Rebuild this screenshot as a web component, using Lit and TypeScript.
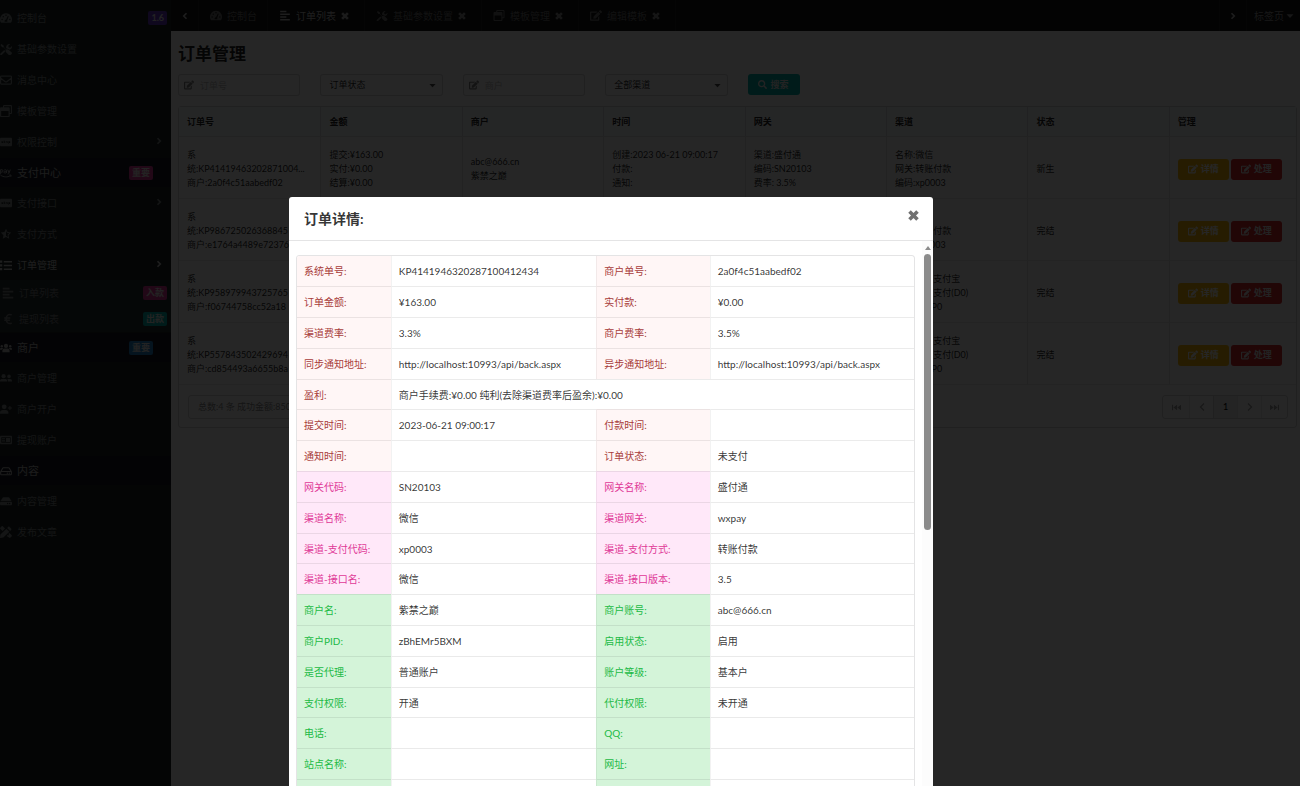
import { LitElement, html, css, svg, nothing } from "lit";
import { customElement, property, state } from "lit/decorators.js";

const ICONS: Record<string, { box: string; body: unknown }> = {
  gauge: {
    box: "0 0 18 16",
    body: svg`<path fill-rule="evenodd" d="M9 1a9 9 0 0 0-7.6 13.8c.2.3.5.5.9.5h13.4c.4 0 .7-.2.9-.5A9 9 0 0 0 9 1zM9 2.8a1 1 0 1 1 0 2.1 1 1 0 0 1 0-2.100zM3.200 11.200a1 1 0 1 1 0-2.100 1 1 0 0 1 0 2.100zM4.900 7a1 1 0 1 1 0-2.100A1 1 0 0 1 4.900 7zM12.900 5.800l-2.200 5.800c.5.9.4 1.600.1 2.200H7.200c-.8-1.400.2-3 1.900-3l2.500-5.600c.4-.7 1.600-.2 1.300.6zM14.800 11.200a1 1 0 1 1 0-2.100 1 1 0 0 1 0 2.100z"/>`,
  },
  tools: {
    box: "0 0 16 16",
    body: svg`<path d="M15.600 12.800l-3.700-3.600c-1.100-1-2.500-1.200-3.800-.6L5 5.400V3.600L2 1.400.6 2.800l2.200 3h1.800L7.700 9c-.6 1.200-.4 2.700.6 3.700l3.700 3.600c.4.4 1.200.4 1.700 0l1.900-1.800c.5-.5.5-1.200 0-1.700z"/><path d="M10.700 8c1 0 1.500.4 2.100.9A4.500 4.500 0 0 0 16 4l-2.400 2.300-2.100-.4-.4-2.100L13.400 1.500A4.500 4.500 0 0 0 8.200 6.900zM6.800 10.600L5.600 9.300.6 14.100c-1.200 1.500.4 3 1.700 1.800l4.500-4.200z"/>`,
  },
  mail: {
    box: "0 0 16 16",
    body: svg`<path fill="none" stroke="currentColor" stroke-width="1.600" d="M1.800 2.800h12.400c.6 0 1 .4 1 1v8.600c0 .6-.4 1-1 1H1.800c-.6 0-1-.4-1-1V3.800c0-.6.4-1 1-1zM1 5.600l5.600 4.300c.9.7 1.900.7 2.800 0L15 5.600"/>`,
  },
  windows: {
    box: "0 0 16 16",
    body: svg`<path fill-rule="evenodd" d="M14.500 0h-9C4.700 0 4 .7 4 1.500V3H1.500C.7 3 0 3.700 0 4.500v10c0 .8.7 1.500 1.500 1.500h10c.8 0 1.500-.7 1.500-1.500V12h1.500c.8 0 1.500-.7 1.500-1.500v-9c0-.8-.7-1.500-1.500-1.500zM11.400 14.500H1.600V8h9.800zM14.500 10.500H13v-6C13 3.700 12.300 3 11.500 3h-6V1.500h9z"/>`,
  },
  card: {
    box: "0 0 18 16",
    body: svg`<path fill-rule="evenodd" d="M1.500 1.500h15c.8 0 1.500.7 1.500 1.500v10c0 .8-.7 1.500-1.500 1.500h-15C.7 14.500 0 13.800 0 13V3c0-.8.7-1.500 1.500-1.500zM2.200 6.700v.9l1.600.8H2.200v1.200h2.500V8.300l-1.500-.8h1.500v-.8zM5.700 5.700v3.900h1.900v-.9h-.9V7.400h.9v-.8h-.9v-.9zM8.700 6.700v2.900h.9V7.500h.9v-.8zM11.100 6.700v2.900h.9V6.700zM12.700 6.700v3.900h.8v-1h1.700V6.700z"/>`,
  },
  pay: {
    box: "0 0 20 16",
    body: svg`<path fill="none" stroke="currentColor" stroke-width="1.400" d="M1 10V2.500h2.400c2.200 0 2.200 4 0 4H1M7 3c2.400-1 3.800-.4 3.800 1v4M10.800 5.500C8 5 6.600 5.700 6.600 6.800 6.800 8.500 9.600 8.400 10.800 7M12.800 2.300l2.200 5.400 2.200-5.400M15 7.700c-.5 1.600-1 2.200-2.400 2M.8 11.500c5 3.600 11.500 4 16.600 1M15.500 11.500c3-.5 3.800-.2 2.300 3"/>`,
  },
  starHalf: {
    box: "0 0 18 16",
    body: svg`<path fill-rule="evenodd" d="M9 0l2.400 5 5.400.8-3.900 3.900.9 5.500L9 12.600l-4.800 2.600.9-5.500L1.200 5.800 6.600 5zM9 3.500v7.300l3 1.600-.6-3.300 2.400-2.300-3.300-.5z"/>`,
  },
  list: {
    box: "0 0 16 16",
    body: svg`<path d="M0 2h3v3H0zM0 7h3v3H0zM0 12h3v3H0zM5 2.500h11v2H5zM5 7.500h11v2H5zM5 12.500h11v2H5z"/>`,
  },
  align: {
    box: "0 0 16 16",
    body: svg`<path d="M1 1h9v2.200H1zM1 5h14v2.200H1zM1 9h9v2.200H1zM1 13h14v2.200H1z"/>`,
  },
  euro: {
    box: "0 0 16 16",
    body: svg`<path fill="none" stroke="currentColor" stroke-width="2" d="M13 2.600C9 .6 5.800 3 5.500 8c.3 5 3.500 7.400 7.500 5.400M3 6.500h8M3 9.500h7.500"/>`,
  },
  users: {
    box: "0 0 20 16",
    body: svg`<circle cx="3" cy="5" r="2"/><circle cx="17" cy="5" r="2"/><circle cx="10" cy="4.500" r="3.500"/><path d="M4 15v-2.200C4 10.300 5.500 9 7.500 9h5c2 0 3.500 1.300 3.500 3.800V15zM0 11V9.700C0 8.500 1 8 2 8h2c.7 0 1 .2 1.400.5C4 9.200 3.400 10 3.200 11zM20 11V9.700c0-1.200-1-1.700-2-1.700h-2c-.7 0-1 .2-1.400.5 1.400.7 2 1.500 2.200 2.500z"/>`,
  },
  friends: {
    box: "0 0 20 16",
    body: svg`<circle cx="6" cy="5" r="3.500"/><circle cx="15" cy="5.300" r="3"/><path d="M0 14v-1.500C0 10.500 1.500 9.500 3.500 9.500h5c2 0 3.500 1 3.500 3V14zM13.300 14h6.700v-1.300c0-2-1.300-3.200-3-3.200h-3.500c-.6 0-1 .1-1.400.3.900.9 1.200 2 1.200 4.200z"/>`,
  },
  userPlus: {
    box: "0 0 20 16",
    body: svg`<circle cx="7" cy="4.300" r="4"/><path d="M0 16v-2.500C0 11 2 9.500 4.200 9.500h5.600c2.200 0 4.200 1.500 4.200 4V16zM15.700 3h1.600v2.500h2.500v1.700h-2.500v2.500h-1.600V7.200h-2.500V5.500h2.500z"/>`,
  },
  idCard: {
    box: "0 0 18 16",
    body: svg`<path fill-rule="evenodd" d="M1.500 1.500h15c.8 0 1.500.7 1.500 1.500v10c0 .8-.7 1.500-1.500 1.500h-15C.7 14.500 0 13.800 0 13V3c0-.8.7-1.500 1.500-1.500zM2 4v8h14V4z"/><path d="M3 5.200h4.500v1.300H3zM3 7.700h4.500V9H3zM3 10.100h5v1H3zM9 5h6v6H9z"/>`,
  },
  hddOutline: {
    box: "0 0 18 16",
    body: svg`<path fill="none" stroke="currentColor" stroke-width="1.600" d="M1 9l3.200-5.400c.3-.4.600-.6 1-.6h7.600c.4 0 .7.200 1 .6L17 9v3.500c0 .6-.4 1-1 1H2c-.6 0-1-.4-1-1zM1 8.700h16"/><circle cx="11" cy="11.200" r="1"/><circle cx="14" cy="11.200" r="1"/>`,
  },
  hdd: {
    box: "0 0 18 16",
    body: svg`<path fill-rule="evenodd" d="M1.500 9h15c.8 0 1.500.7 1.500 1.500v2.300c0 .8-.7 1.500-1.500 1.500h-15c-.8 0-1.500-.7-1.500-1.500v-2.300C0 9.700.7 9 1.500 9zM14.500 10.700a1 1 0 1 0 0 2 1 1 0 0 0 0-2zM11.500 10.700a1 1 0 1 0 0 2 1 1 0 0 0 0-2z"/><path d="M.7 8L4 3.200c.3-.4.7-.7 1.200-.7h7.600c.5 0 .9.300 1.200.7L17.300 8z"/>`,
  },
  pencilRuler: {
    box: "0 0 16 16",
    body: svg`<path d="M3.400 6.700l3.300-3.300L4 .6c-.6-.6-1.500-.6-2 0L.6 2c-.6.600-.6 1.500 0 2zM12.800 1.300l2 2c.6.600.6 1.300 0 1.900l-1.300 1.300-4-4 1.300-1.300c.6-.5 1.400-.5 2 0zM8.500 3.500l4 4-8 7.900L.7 16c-.4 0-.7-.3-.7-.7l.6-3.900zM15.400 12l-2.800-2.800-1.600 1.600 1 1-.8.800-1-1-.9.900 1 1-.8.800-1-1L12 15.400c.6.600 1.500.6 2 0l1.400-1.400c.6-.6.6-1.500 0-2z"/>`,
  },
  edit: {
    box: "0 0 576 512",
    body: svg`<path d="M402.6 83.2l90.2 90.2c3.8 3.8 3.8 10 0 13.8L274.4 405.6l-92.8 10.3c-12.4 1.4-22.9-9.100-21.5-21.5l10.3-92.8L388.8 83.2c3.8-3.8 10-3.8 13.8 0zm162-22.9l-48.8-48.8c-15.2-15.2-39.9-15.2-55.2 0l-35.4 35.400c-3.8 3.8-3.8 10 0 13.8l90.2 90.2c3.8 3.8 10 3.8 13.8 0l35.4-35.4c15.2-15.3 15.2-40 0-55.2zM384 346.2V448H64V128h229.8c3.2 0 6.2-1.3 8.5-3.5l40-40c7.6-7.6 2.2-20.5-8.5-20.5H48C21.5 64 0 85.5 0 112v352c0 26.5 21.5 48 48 48h352c26.5 0 48-21.5 48-48V306.2c0-10.7-12.9-16-20.5-8.5l-40 40c-2.2 2.3-3.500 5.300-3.500 8.500z"/>`,
  },
  search: {
    box: "0 0 512 512",
    body: svg`<path d="M505 442.7L405.3 343c-4.5-4.5-10.6-7-17-7H372c27.6-35.3 44-79.7 44-128C416 93.100 322.900 0 208 0S0 93.100 0 208s93.100 208 208 208c48.300 0 92.700-16.400 128-44v16.300c0 6.400 2.500 12.500 7 17l99.700 99.700c9.400 9.400 24.600 9.400 33.900 0l28.300-28.300c9.400-9.400 9.400-24.600.1-34zM208 336c-70.700 0-128-57.200-128-128 0-70.700 57.200-128 128-128 70.700 0 128 57.200 128 128 0 70.700-57.200 128-128 128z"/>`,
  },
  times: {
    box: "0 0 16 16",
    body: svg`<path fill="none" stroke="currentColor" stroke-width="5.200" d="M2.200 2.200l11.600 11.600M13.800 2.200L2.200 13.800"/>`,
  },
  left: { box: "0 0 16 16", body: svg`<path fill="none" stroke="currentColor" stroke-width="3.500" d="M11 2.500L5.500 8l5.500 5.500"/>` },
  right: { box: "0 0 16 16", body: svg`<path fill="none" stroke="currentColor" stroke-width="3.500" d="M5 2.500L10.500 8 5 13.500"/>` },
  thinLeft: { box: "0 0 16 16", body: svg`<path fill="none" stroke="currentColor" stroke-width="2.600" d="M12 1L5 8l7 7"/>` },
  thinRight: { box: "0 0 16 16", body: svg`<path fill="none" stroke="currentColor" stroke-width="2.600" d="M4 1l7 7-7 7"/>` },
  first: { box: "0 0 16 16", body: svg`<path d="M0 3h2v10H0zM9 3v10L2.500 8zM16 3v10L9.500 8z"/>` },
  last: { box: "0 0 16 16", body: svg`<path d="M14 3h2v10h-2zM7 3v10l6.500-5zM0 3v10l6.500-5z"/>` },
  caret: { box: "0 0 16 16", body: svg`<path d="M1 4.500h14l-7 7.500z"/>` },
};

@customElement("ui-icon")
export class UiIcon extends LitElement {
  @property() name = "";
  static styles = css`
    :host { display: inline-block; width: 12px; height: 12px; flex: none; }
    svg { display: block; width: 100%; height: 100%; fill: currentColor; }
  `;
  render() {
    const icon = ICONS[this.name];
    return icon ? html`<svg viewBox=${icon.box} aria-hidden="true">${icon.body}</svg>` : nothing;
  }
}

interface Entry { icon: string; text: string; tag?: string; hue?: string; more?: boolean; open?: boolean; children?: Entry[] }
interface Section { head?: Entry; items: Entry[] }

const MENU: Section[] = [
  {
    items: [
      { icon: "gauge", text: "控制台", tag: "1.6", hue: "purple" },
      { icon: "tools", text: "基础参数设置" },
      { icon: "mail", text: "消息中心" },
      { icon: "windows", text: "模板管理" },
      { icon: "card", text: "权限控制", more: true },
    ],
  },
  {
    head: { icon: "pay", text: "支付中心", tag: "重要", hue: "pink" },
    items: [
      { icon: "card", text: "支付接口", more: true },
      { icon: "starHalf", text: "支付方式" },
      {
        icon: "list", text: "订单管理", more: true, open: true,
        children: [
          { icon: "align", text: "订单列表", tag: "入款", hue: "pink" },
          { icon: "euro", text: "提现列表", tag: "出款", hue: "teal" },
        ],
      },
    ],
  },
  {
    head: { icon: "users", text: "商户", tag: "重要", hue: "blue" },
    items: [
      { icon: "friends", text: "商户管理" },
      { icon: "userPlus", text: "商户开户" },
      { icon: "idCard", text: "提现账户" },
    ],
  },
  {
    head: { icon: "hddOutline", text: "内容" },
    items: [
      { icon: "hdd", text: "内容管理" },
      { icon: "pencilRuler", text: "发布文章" },
    ],
  },
];

const TABS = [
  { icon: "gauge", text: "控制台", fixed: true },
  { icon: "align", text: "订单列表", active: true },
  { icon: "tools", text: "基础参数设置" },
  { icon: "windows", text: "模板管理" },
  { icon: "edit", text: "编辑模板" },
];

const HEADS = ["订单号", "金额", "商户", "时间", "网关", "渠道", "状态", "管理"];
const ALIPAY = ["名称:官方支付宝", "网关:官方支付(D0)", "编码:ZFBP0"];

const ORDERS: string[][][] = [
  [
    ["系", "统:KP41419463202871004...", "商户:2a0f4c51aabedf02"],
    ["提交:¥163.00", "实付:¥0.00", "结算:¥0.00"],
    ["abc@666.cn", "紫禁之巅"],
    ["创建:2023 06-21 09:00:17", "付款:", "通知:"],
    ["渠道:盛付通", "编码:SN20103", "费率: 3.5%"],
    ["名称:微信", "网关:转账付款", "编码:xp0003"],
    ["新生"],
  ],
  [["系", "统:KP986725026368845", "商户:e1764a4489e72376"], [], [], [], [], ["名称:微信", "网关:转账付款", "编码:xp0003"], ["完结"]],
  [["系", "统:KP958979943725765", "商户:f06744758cc52a18"], [], [], [], [], ALIPAY, ["完结"]],
  [["系", "统:KP557843502429694", "商户:cd854493a6655b8a"], [], [], [], [], ALIPAY, ["完结"]],
];

const DETAIL: { tone: string; cells: string[] }[] = [
  { tone: "red", cells: ["系统单号:", "KP4141946320287100412434", "商户单号:", "2a0f4c51aabedf02"] },
  { tone: "red", cells: ["订单金额:", "¥163.00", "实付款:", "¥0.00"] },
  { tone: "red", cells: ["渠道费率:", "3.3%", "商户费率:", "3.5%"] },
  { tone: "red", cells: ["同步通知地址:", "http://localhost:10993/api/back.aspx", "异步通知地址:", "http://localhost:10993/api/back.aspx"] },
  { tone: "red", cells: ["盈利:", "商户手续费:¥0.00 纯利(去除渠道费率后盈余):¥0.00"] },
  { tone: "red", cells: ["提交时间:", "2023-06-21 09:00:17", "付款时间:", ""] },
  { tone: "red", cells: ["通知时间:", "", "订单状态:", "未支付"] },
  { tone: "pink", cells: ["网关代码:", "SN20103", "网关名称:", "盛付通"] },
  { tone: "pink", cells: ["渠道名称:", "微信", "渠道网关:", "wxpay"] },
  { tone: "pink", cells: ["渠道-支付代码:", "xp0003", "渠道-支付方式:", "转账付款"] },
  { tone: "pink", cells: ["渠道-接口名:", "微信", "渠道-接口版本:", "3.5"] },
  { tone: "green", cells: ["商户名:", "紫禁之巅", "商户账号:", "abc@666.cn"] },
  { tone: "green", cells: ["商户PID:", "zBhEMr5BXM", "启用状态:", "启用"] },
  { tone: "green", cells: ["是否代理:", "普通账户", "账户等级:", "基本户"] },
  { tone: "green", cells: ["支付权限:", "开通", "代付权限:", "未开通"] },
  { tone: "green", cells: ["电话:", "", "QQ:", ""] },
  { tone: "green", cells: ["站点名称:", "", "网址:", ""] },
  { tone: "green", cells: ["", "", "", ""] },
];

@customElement("side-menu")
export class SideMenu extends LitElement {
  static styles = css`
    :host { display: block; padding-top: 2px; background: #1b2625; color: #848a8a; }
    .group { display: flex; flex-direction: column; padding-bottom: 1px; }
    a { display: flex; align-items: center; gap: 5px; height: 31px; padding: 0 4px 0 0; color: inherit; text-decoration: none; }
    .label { flex: 1; }
    .head { height: 29px; padding: 0 18px 0 0; font-size: 11px; color: #bcbcbc; background: #171a26; }
    .open { color: #c8c8c8; }
    .sub { background: #272e31; color: #7c8282; }
    .sub a { height: 26px; padding-left: 2px; }
    .more { width: 8px; height: 8px; margin: 0 4px 2px 0; }
    .tag { padding: 0 3px; border-radius: 2px; font-size: 9px; line-height: 14px; font-weight: 700; color: #e8e8e8; }
    .purple { background: #6435c9; }
    .pink { background: #e03997; }
    .teal { background: #00b5ad; }
    .blue { background: #2185d0; }
  `;
  private entry(e: Entry, cls = "") {
    return html`<a href="#" class="${cls} ${e.open ? "open" : ""}">
      <ui-icon name=${e.icon}></ui-icon><span class="label">${e.text}</span>
      ${e.tag ? html`<span class="tag ${e.hue}">${e.tag}</span>` : nothing}
      ${e.more ? html`<ui-icon class="more" name="right"></ui-icon>` : nothing}
    </a>`;
  }
  render() {
    return html`<nav>${MENU.map((s) => html`
      ${s.head ? this.entry(s.head, "head") : nothing}
      <div class="group">${s.items.map((i) => html`${this.entry(i)}
        ${i.children ? html`<div class="sub">${i.children.map((c) => this.entry(c))}</div>` : nothing}`)}
      </div>`)}</nav>`;
  }
}

@customElement("tab-strip")
export class TabStrip extends LitElement {
  static styles = css`
    :host { display: flex; height: 31px; background: #141414; color: #747474; }
    button { font: inherit; color: inherit; background: none; border: 0; margin: 0; padding: 0; }
    .step, .tab, .pages { display: flex; align-items: center; border-right: 1px solid #262626; }
    .step { width: 28px; justify-content: center; color: #c4c4c4; }
    .step ui-icon { width: 8px; height: 8px; }
    .tab { padding: 0 15px 0 11px; gap: 5px; }
    .fixed { padding-right: 10px; }
    .active { color: #c8c8c8; }
    .name { display: flex; align-items: center; gap: 5px; }
    .name ui-icon { width: 12px; height: 11px; }
    .close ui-icon { display: block; width: 8px; height: 8px; }
    .close { color: #909090; }
    .active .close { color: #b4b4b4; }
    .end { margin-left: auto; border-left: 1px solid #262626; }
    .pages { border: 0; gap: 2px; padding: 0 6px 0 7px; color: #9a9a9a; }
    .pages ui-icon { width: 8px; height: 8px; }
  `;
  render() {
    return html`
      <button class="step" aria-label="向左"><ui-icon name="left"></ui-icon></button>
      ${TABS.map((t) => html`<div class="tab ${t.fixed ? "fixed" : ""} ${t.active ? "active" : ""}">
        <button class="name"><ui-icon name=${t.icon}></ui-icon>${t.text}</button>
        ${t.fixed ? nothing : html`<button class="close" aria-label="关闭"><ui-icon name="times"></ui-icon></button>`}
      </div>`)}
      <button class="step end" aria-label="向右"><ui-icon name="right"></ui-icon></button>
      <button class="pages">标签页<ui-icon name="caret"></ui-icon></button>`;
  }
}

@customElement("order-page")
export class OrderPage extends LitElement {
  static styles = css`
    :host { display: block; padding: 10px 3px 0 7px; color: rgba(0, 0, 0, 0.87); font-size: 9px; line-height: 14px; }
    h1 { margin: 0; font-size: 17px; line-height: 26px; font-weight: 700; }
    input, select, button { font: inherit; color: inherit; margin: 0; box-sizing: border-box; }
    .filters { display: grid; grid-template-columns: repeat(8, 1fr); column-gap: 20px; padding: 7px 0 10px; }
    .field { display: grid; align-items: center; height: 22px; }
    .field > * { grid-area: 1 / 1; }
    .field input, .field select { width: 100%; height: 100%; border: 1px solid rgba(34, 36, 38, 0.18); border-radius: 3px; background: #fff; appearance: none; outline: 0; }
    .field input { padding: 0 8px 0 21px; }
    .field select { padding: 0 20px 0 8px; }
    .field input::placeholder { color: #bcbcbc; opacity: 1; }
    .field ui-icon { z-index: 1; width: 10px; height: 10px; margin-left: 6px; opacity: 0.55; pointer-events: none; }
    .field .drop { width: 7px; height: 7px; margin: 0 7px 0 auto; opacity: 0.8; }
    .btn { display: inline-flex; align-items: center; justify-content: center; gap: 3px; width: 51px; height: 21px; padding: 0; border: 0; border-radius: 3px; color: #e8e8e8; font-weight: 700; }
    .btn ui-icon { width: 10px; height: 10px; }
    .search { background: #00b5ad; width: 52px; }
    .search ui-icon { width: 9px; height: 9px; }
    .frame { border: 1px solid rgba(34, 36, 38, 0.18); border-radius: 3px; }
    table { width: 100%; border-collapse: separate; border-spacing: 0; table-layout: fixed; }
    col.even { width: 12.66%; }
    th, td { padding: 0 8px; text-align: left; border-left: 1px solid rgba(34, 36, 38, 0.12); white-space: nowrap; overflow: hidden; }
    th:first-child, td:first-child { border-left: 0; }
    th { height: 29px; background: #f9fafb; border-bottom: 1px solid rgba(34, 36, 38, 0.1); }
    td { height: 58px; padding-top: 3px; border-bottom: 1px solid rgba(34, 36, 38, 0.1); }
    .acts { display: flex; gap: 2px; }
    .yellow { background: #fbbd08; color: #fff; }
    .red { background: #db2828; }
    .foot { display: flex; justify-content: space-between; padding: 10px 8px 8px 9px; }
    .total { display: flex; align-items: center; width: 180px; padding: 0 9px; border: 1px solid rgba(34, 36, 38, 0.18); border-radius: 3px; color: #8c8c8c; white-space: nowrap; }
    .pager { display: flex; border: 1px solid rgba(34, 36, 38, 0.18); border-radius: 3px; }
    .pager button { display: flex; align-items: center; justify-content: center; width: 24px; height: 22px; padding: 0; border: 0; border-left: 1px solid rgba(34, 36, 38, 0.1); background: none; color: rgba(0, 0, 0, 0.38); }
    .pager button:first-child { border-left: 0; }
    .pager .edge { width: 26px; }
    .pager .now { background: rgba(0, 0, 0, 0.07); color: #000; }
    .pager ui-icon { width: 8px; height: 8px; }
    .pager .edge ui-icon { width: 9px; height: 9px; }
  `;
  render() {
    return html`
      <h1>订单管理</h1>
      <form class="filters" @submit=${(e: Event) => e.preventDefault()}>
        <label class="field"><ui-icon name="edit"></ui-icon><input placeholder="订单号" aria-label="订单号" /></label>
        <label class="field"><select aria-label="订单状态"><option>订单状态</option></select><ui-icon class="drop" name="caret"></ui-icon></label>
        <label class="field"><ui-icon name="edit"></ui-icon><input placeholder="商户" aria-label="商户" /></label>
        <label class="field"><select aria-label="渠道"><option>全部渠道</option></select><ui-icon class="drop" name="caret"></ui-icon></label>
        <button class="btn search"><ui-icon name="search"></ui-icon>搜索</button>
      </form>
      <div class="frame">
        <table>
          <colgroup>${HEADS.slice(1).map(() => html`<col class="even" />`)}<col /></colgroup>
          <thead><tr>${HEADS.map((h) => html`<th>${h}</th>`)}</tr></thead>
          <tbody>${ORDERS.map((o) => html`<tr>
            ${o.map((c) => html`<td>${c.map((l) => html`<div>${l}</div>`)}</td>`)}
            <td><div class="acts">
              <button class="btn yellow"><ui-icon name="edit"></ui-icon>详情</button>
              <button class="btn red"><ui-icon name="edit"></ui-icon>处理</button>
            </div></td></tr>`)}
          </tbody>
        </table>
        <div class="foot">
          <div class="total">总数:4 条 成功金额:850</div>
          <div class="pager">
            <button class="edge" aria-label="首页"><ui-icon name="first"></ui-icon></button>
            <button aria-label="上一页"><ui-icon name="thinLeft"></ui-icon></button>
            <button class="now">1</button>
            <button aria-label="下一页"><ui-icon name="thinRight"></ui-icon></button>
            <button class="edge" aria-label="末页"><ui-icon name="last"></ui-icon></button>
          </div>
        </div>
      </div>`;
  }
}

@customElement("order-dialog")
export class OrderDialog extends LitElement {
  static styles = css`
    :host { display: flex; flex-direction: column; background: #fff; border-radius: 3px 3px 0 0; overflow: hidden; color: rgba(0, 0, 0, 0.8); font-size: 10px; line-height: 14px; }
    header { display: flex; align-items: flex-start; justify-content: space-between; flex: none; padding: 11px 14px 11px 15px; border-bottom: 1px solid rgba(34, 36, 38, 0.12); }
    h2 { margin: 0; font-size: 14px; line-height: 21px; font-weight: 700; }
    .close { margin: 2px 0 0; padding: 0; border: 0; background: none; color: #707070; }
    .close ui-icon { display: block; width: 11px; height: 11px; }
    .body { display: flex; flex: 1; min-height: 0; }
    .content { flex: 1; min-width: 0; padding: 14px 7px 0; }
    .frame { border: 1px solid rgba(34, 36, 38, 0.12); border-radius: 3px; overflow: hidden; }
    table { width: 100%; border-collapse: separate; border-spacing: 0; table-layout: fixed; }
    .c1 { width: 15.2%; }
    .c2 { width: 33.3%; }
    .c3 { width: 18.4%; }
    th, td { box-sizing: border-box; height: 31px; padding: 0 7px; text-align: left; font-weight: 400; border-top: 1px solid rgba(34, 36, 38, 0.09); border-left: 1px solid rgba(34, 36, 38, 0.06); white-space: nowrap; }
    tr:nth-child(5n) > * { height: 30px; }
    tr:first-child > * { border-top: 0; height: 30px; }
    tr > :first-child { border-left: 0; }
    .red th { background: #fff6f6; color: #a83c3a; }
    .pink th { background: #ffe8f9; color: #e03997; }
    .green th { background: #d4f4d9; color: #21ba45; }
    .bar { display: flex; flex-direction: column; align-items: center; width: 11px; padding-top: 5px; gap: 4px; background: #fcfcfc; }
    .up { width: 0; height: 0; border: 3px solid transparent; border-top: 0; border-bottom: 4px solid #8b8b8b; }
    .thumb { width: 7px; height: 276px; border-radius: 4px; background: #8b8b8b; }
  `;
  render() {
    return html`
      <header><h2 id="title">订单详情:</h2><button class="close" aria-label="关闭"><ui-icon name="times"></ui-icon></button></header>
      <div class="body">
        <div class="content"><div class="frame">
          <table aria-labelledby="title">
            <colgroup><col class="c1" /><col class="c2" /><col class="c3" /><col /></colgroup>
            <tbody>${DETAIL.map((r) => html`<tr class=${r.tone}>
              ${r.cells.map((c, i) => i % 2 === 0
                ? html`<th scope="row">${c}</th>`
                : html`<td colspan=${r.cells.length === 2 ? 3 : 1}>${c}</td>`)}</tr>`)}
            </tbody>
          </table>
        </div></div>
        <div class="bar"><span class="up"></span><span class="thumb"></span></div>
      </div>`;
  }
}

@customElement("app-root")
export class AppRoot extends LitElement {
  @state() private dialogOpen = true;
  static styles = css`
    :host { display: block; position: relative; height: 100vh; overflow: hidden; background: #fff; font: 10px/14px Lato, "Noto Sans CJK SC", sans-serif; }
    .shell { display: grid; grid-template-columns: 171px 1fr; height: 100%; }
    .main { min-width: 0; }
    .dimmer { position: absolute; inset: 0; display: flex; padding: 197px 0 0 289px; box-sizing: border-box; background: rgba(0, 0, 0, 0.85); }
    order-dialog { width: 644px; max-width: 100%; }
  `;
  render() {
    return html`
      <div class="shell">
        <side-menu></side-menu>
        <div class="main"><tab-strip></tab-strip><order-page></order-page></div>
      </div>
      ${this.dialogOpen ? html`<div class="dimmer"><order-dialog role="dialog" aria-modal="true" aria-label="订单详情"></order-dialog></div>` : nothing}`;
  }
}
